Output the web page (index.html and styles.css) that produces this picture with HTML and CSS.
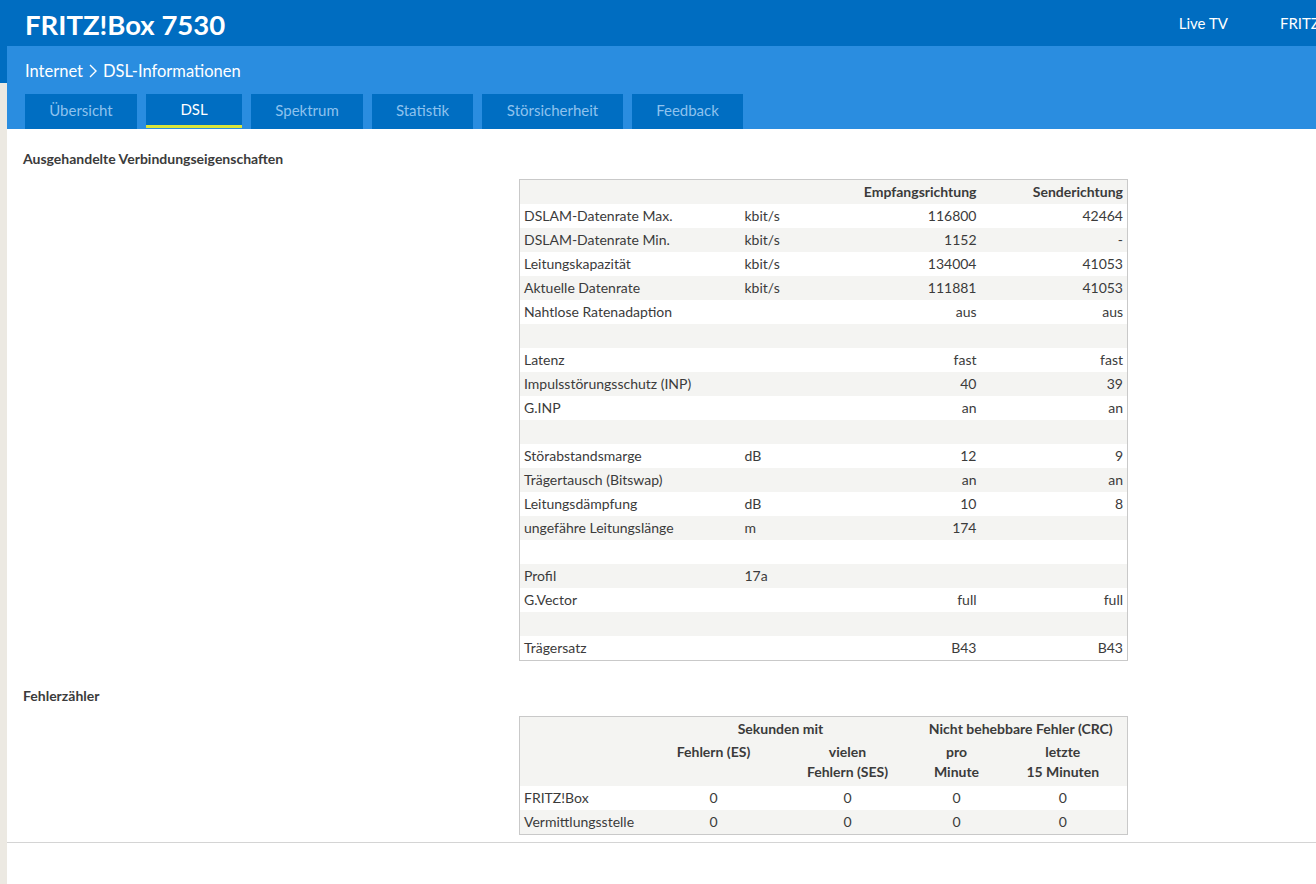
FILE: index.html
```html
<!DOCTYPE html>
<html lang="de">
<head>
<meta charset="utf-8">
<title>FRITZ!Box 7530 - DSL-Informationen</title>
<link rel="stylesheet" href="styles.css">
</head>
<body>
<header class="topbar">
  <div class="brand">FRITZ!Box 7530</div>
  <nav class="topnav">
    <span class="topnav-item">Live TV</span>
    <span class="topnav-item">FRITZ!NAS</span>
    <span class="topnav-item">MyFRITZ!</span>
  </nav>
</header>
<div class="page">
  <aside class="gutter"><div class="gutter-top"></div></aside>
  <main class="main">
    <div class="subbar">
      <div class="crumbs">
        <span>Internet</span>
        <svg class="chev" width="10" height="16" viewBox="0 0 10 16"><path d="M2 2 L8 8 L2 14" fill="none" stroke="#fff" stroke-width="1.4"/></svg>
        <span>DSL-Informationen</span>
      </div>
      <div class="tabs">
        <span class="tab t1">Übersicht</span>
        <span class="tab t2 active">DSL</span>
        <span class="tab t3">Spektrum</span>
        <span class="tab t4">Statistik</span>
        <span class="tab t5">Störsicherheit</span>
        <span class="tab t6">Feedback</span>
      </div>
    </div>
    <div class="content">
      <h2 class="section-title">Ausgehandelte Verbindungseigenschaften</h2>
      <table class="grid props">
        <colgroup><col class="c1"><col class="c2"><col class="c3"><col class="c4"></colgroup>
        <tr class="head"><td></td><td></td><td class="r">Empfangsrichtung</td><td class="r">Senderichtung</td></tr>
        <tr><td>DSLAM-Datenrate Max.</td><td>kbit/s</td><td class="r">116800</td><td class="r">42464</td></tr>
        <tr><td>DSLAM-Datenrate Min.</td><td>kbit/s</td><td class="r">1152</td><td class="r">-</td></tr>
        <tr><td>Leitungskapazität</td><td>kbit/s</td><td class="r">134004</td><td class="r">41053</td></tr>
        <tr><td>Aktuelle Datenrate</td><td>kbit/s</td><td class="r">111881</td><td class="r">41053</td></tr>
        <tr><td>Nahtlose Ratenadaption</td><td></td><td class="r">aus</td><td class="r">aus</td></tr>
        <tr><td></td><td></td><td></td><td></td></tr>
        <tr><td>Latenz</td><td></td><td class="r">fast</td><td class="r">fast</td></tr>
        <tr><td>Impulsstörungsschutz (INP)</td><td></td><td class="r">40</td><td class="r">39</td></tr>
        <tr><td>G.INP</td><td></td><td class="r">an</td><td class="r">an</td></tr>
        <tr><td></td><td></td><td></td><td></td></tr>
        <tr><td>Störabstandsmarge</td><td>dB</td><td class="r">12</td><td class="r">9</td></tr>
        <tr><td>Trägertausch (Bitswap)</td><td></td><td class="r">an</td><td class="r">an</td></tr>
        <tr><td>Leitungsdämpfung</td><td>dB</td><td class="r">10</td><td class="r">8</td></tr>
        <tr><td>ungefähre Leitungslänge</td><td>m</td><td class="r">174</td><td class="r"></td></tr>
        <tr><td></td><td></td><td></td><td></td></tr>
        <tr><td>Profil</td><td>17a</td><td></td><td></td></tr>
        <tr><td>G.Vector</td><td></td><td class="r">full</td><td class="r">full</td></tr>
        <tr><td></td><td></td><td></td><td></td></tr>
        <tr><td>Trägersatz</td><td></td><td class="r">B43</td><td class="r">B43</td></tr>
      </table>
      <h2 class="section-title second">Fehlerzähler</h2>
      <table class="grid errors">
        <colgroup><col class="e1"><col class="e2"><col class="e3"><col class="e4"><col class="e5"></colgroup>
        <tr class="head"><td></td><td colspan="2" class="c">Sekunden mit</td><td colspan="2" class="c">Nicht behebbare Fehler (CRC)</td></tr>
        <tr class="head sub"><td></td><td class="c top">Fehlern (ES)</td><td class="c">vielen<br>Fehlern (SES)</td><td class="c">pro<br>Minute</td><td class="c">letzte<br>15 Minuten</td></tr>
        <tr class="w"><td>FRITZ!Box</td><td class="c">0</td><td class="c">0</td><td class="c">0</td><td class="c">0</td></tr>
        <tr class="g"><td>Vermittlungsstelle</td><td class="c">0</td><td class="c">0</td><td class="c">0</td><td class="c">0</td></tr>
      </table>
      <div class="footer-line"></div>
    </div>
  </main>
</div>
</body>
</html>
```
FILE: styles.css
```css
html, body {
  margin: 0;
  padding: 0;
}
body {
  width: 1316px;
  height: 884px;
  overflow: hidden;
  background: #ffffff;
  font-family: Lato, "Source Sans Pro", "Noto Sans", sans-serif;
  color: #3b3b3b;
}
.topbar {
  height: 46px;
  background: #006dc1;
  display: flex;
  align-items: center;
  padding-left: 25px;
  overflow: hidden;
  white-space: nowrap;
}
.brand {
  color: #fff;
  font-weight: 700;
  font-size: 27.5px;
  letter-spacing: 0;
  flex: 0 0 auto;
  padding-top: 2px;
}
.topnav {
  margin-left: auto;
  display: flex;
  gap: 52px;
  margin-right: -155px;
  flex: 0 0 auto;
}
.topnav-item {
  color: #fff;
  font-size: 15px;
}
.page {
  display: grid;
  grid-template-columns: 7px 1fr;
  height: 838px;
}
.gutter {
  background: #ece9e2;
}
.gutter-top {
  height: 37px;
  background: #006dc1;
}
.main {
  display: flex;
  flex-direction: column;
}
.subbar {
  background: #2a8de0;
  height: 83px;
  padding-left: 18px;
  display: flex;
  flex-direction: column;
}
.crumbs {
  height: 48px;
  display: flex;
  align-items: center;
  gap: 4px;
  color: #fff;
  font-size: 16.5px;
  padding-top: 2px;
  box-sizing: border-box;
}
.chev {
  margin: 0 1px;
}
.tabs {
  display: flex;
  gap: 9px;
  height: 35px;
}
.tab {
  background: #006ec2;
  color: #8ec2ee;
  font-size: 15px;
  display: flex;
  align-items: center;
  justify-content: center;
  box-sizing: border-box;
  padding-bottom: 4px;
}
.t1 { width: 112px; }
.t2 { width: 96px; }
.t3 { width: 112px; }
.t4 { width: 101px; }
.t5 { width: 141px; }
.t6 { width: 111px; }
.tab.active {
  color: #fff;
  border-bottom: 3px solid #d8e43a;
  padding-bottom: 2px;
  height: 34px;
}
.content {
  flex: 1;
  display: flex;
  flex-direction: column;
}
.section-title {
  margin: 20px 0 0 16px;
  font-size: 14px;
  font-weight: 700;
  line-height: 20px;
  color: #3b3b3b;
}
.section-title.second {
  margin-top: 25px;
}
.grid {
  border-collapse: collapse;
  border: 1px solid #c9c9c9;
  margin-left: 512px;
  width: 608px;
  table-layout: fixed;
  font-size: 14px;
  color: #3b3b3b;
}
.props {
  margin-top: 10px;
}
.errors {
  margin-top: 10px;
}
.grid td {
  height: 24px;
  padding: 0 4px;
  line-height: 18px;
  white-space: nowrap;
  vertical-align: middle;
}
.grid td.r { text-align: right; }
.grid td.c { text-align: center; }
.props tr:nth-child(odd) { background: #f4f4f2; }
.props tr:nth-child(even) { background: #ffffff; }
.grid tr.head td {
  font-weight: 700;
}
.c1 { width: 221px; }
.c2 { width: 90px; }
.c3 { width: 150px; }
.c4 { width: 147px; }
.errors tr.head { background: #f4f4f2; }
.errors tr.sub td {
  height: 44px;
  vertical-align: top;
  line-height: 20px;
  padding-top: 1px;
}
.errors tr.w { background: #ffffff; }
.errors tr.g { background: #f4f4f2; }
.e1 { width: 127px; }
.e2 { width: 134px; }
.e3 { width: 134px; }
.e4 { width: 84px; }
.e5 { width: 129px; }
.footer-line {
  margin-top: 7px;
  border-top: 1px solid #d4d4d4;
}
```
